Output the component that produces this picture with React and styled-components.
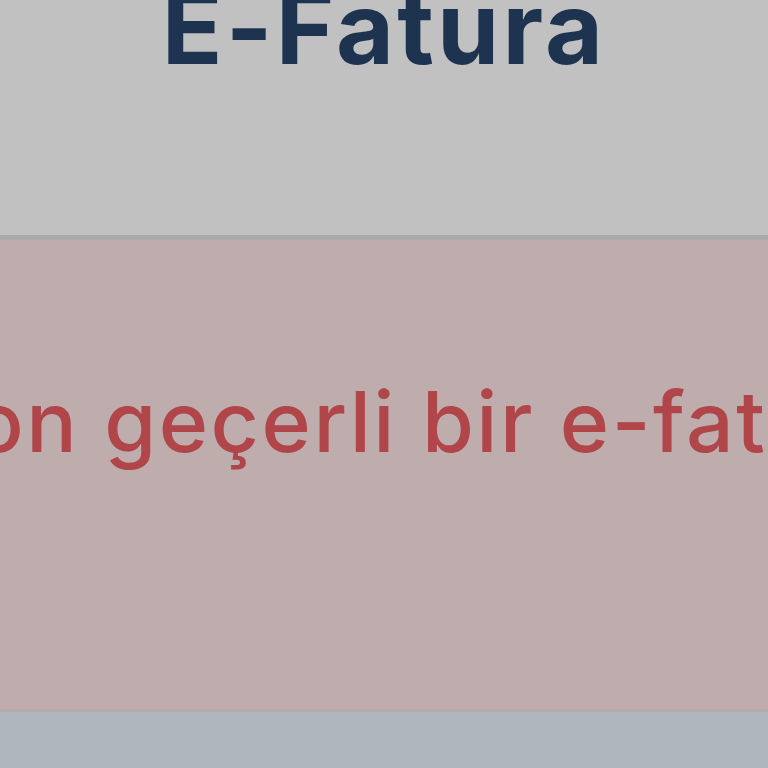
import React from 'react';
import styled, { createGlobalStyle } from 'styled-components';

const GlobalStyle = createGlobalStyle`
  html, body {
    margin: 0;
    padding: 0;
    background: #b0b6bd;
  }
  body {
    font-family: Inter, "Noto Sans", "Liberation Sans", sans-serif;
    width: 768px;
    height: 768px;
    overflow: hidden;
  }
`;

const Page = styled.div`
  display: flex;
  flex-direction: column;
  width: 768px;
  height: 768px;
  overflow: hidden;
`;

const Header = styled.header`
  display: flex;
  justify-content: center;
  align-items: flex-start;
  height: 235px;
  background-color: #c1c1c1;
  border-bottom: 5px solid #a9a9a9;
  overflow: hidden;
`;

const Title = styled.h1`
  margin: -22px 0 0 0;
  font-size: 100px;
  line-height: 1;
  font-weight: 700;
  color: #1e3350;
  letter-spacing: 3.2px;
`;

const ErrorBox = styled.div`
  display: flex;
  align-items: flex-start;
  height: 472px;
  padding-top: 140px;
  box-sizing: border-box;
  background-color: #bfadad;
  border-bottom: 3px solid #b5aaad;
  overflow: hidden;
`;

const ErrorText = styled.p`
  margin: 0 0 0 -27px;
  font-size: 84px;
  line-height: 1;
  font-weight: 500;
  letter-spacing: 2.5px;
  color: #b0454a;
  white-space: nowrap;
`;

const Footer = styled.div`
  flex: 1;
  background-color: #b0b6bd;
`;

export default function App() {
  return (
    <>
      <GlobalStyle />
      <Page>
        <Header>
          <Title>E-Fatura</Title>
        </Header>
        <ErrorBox>
          <ErrorText>on geçerli bir e-fatura değil</ErrorText>
        </ErrorBox>
        <Footer />
      </Page>
    </>
  );
}
